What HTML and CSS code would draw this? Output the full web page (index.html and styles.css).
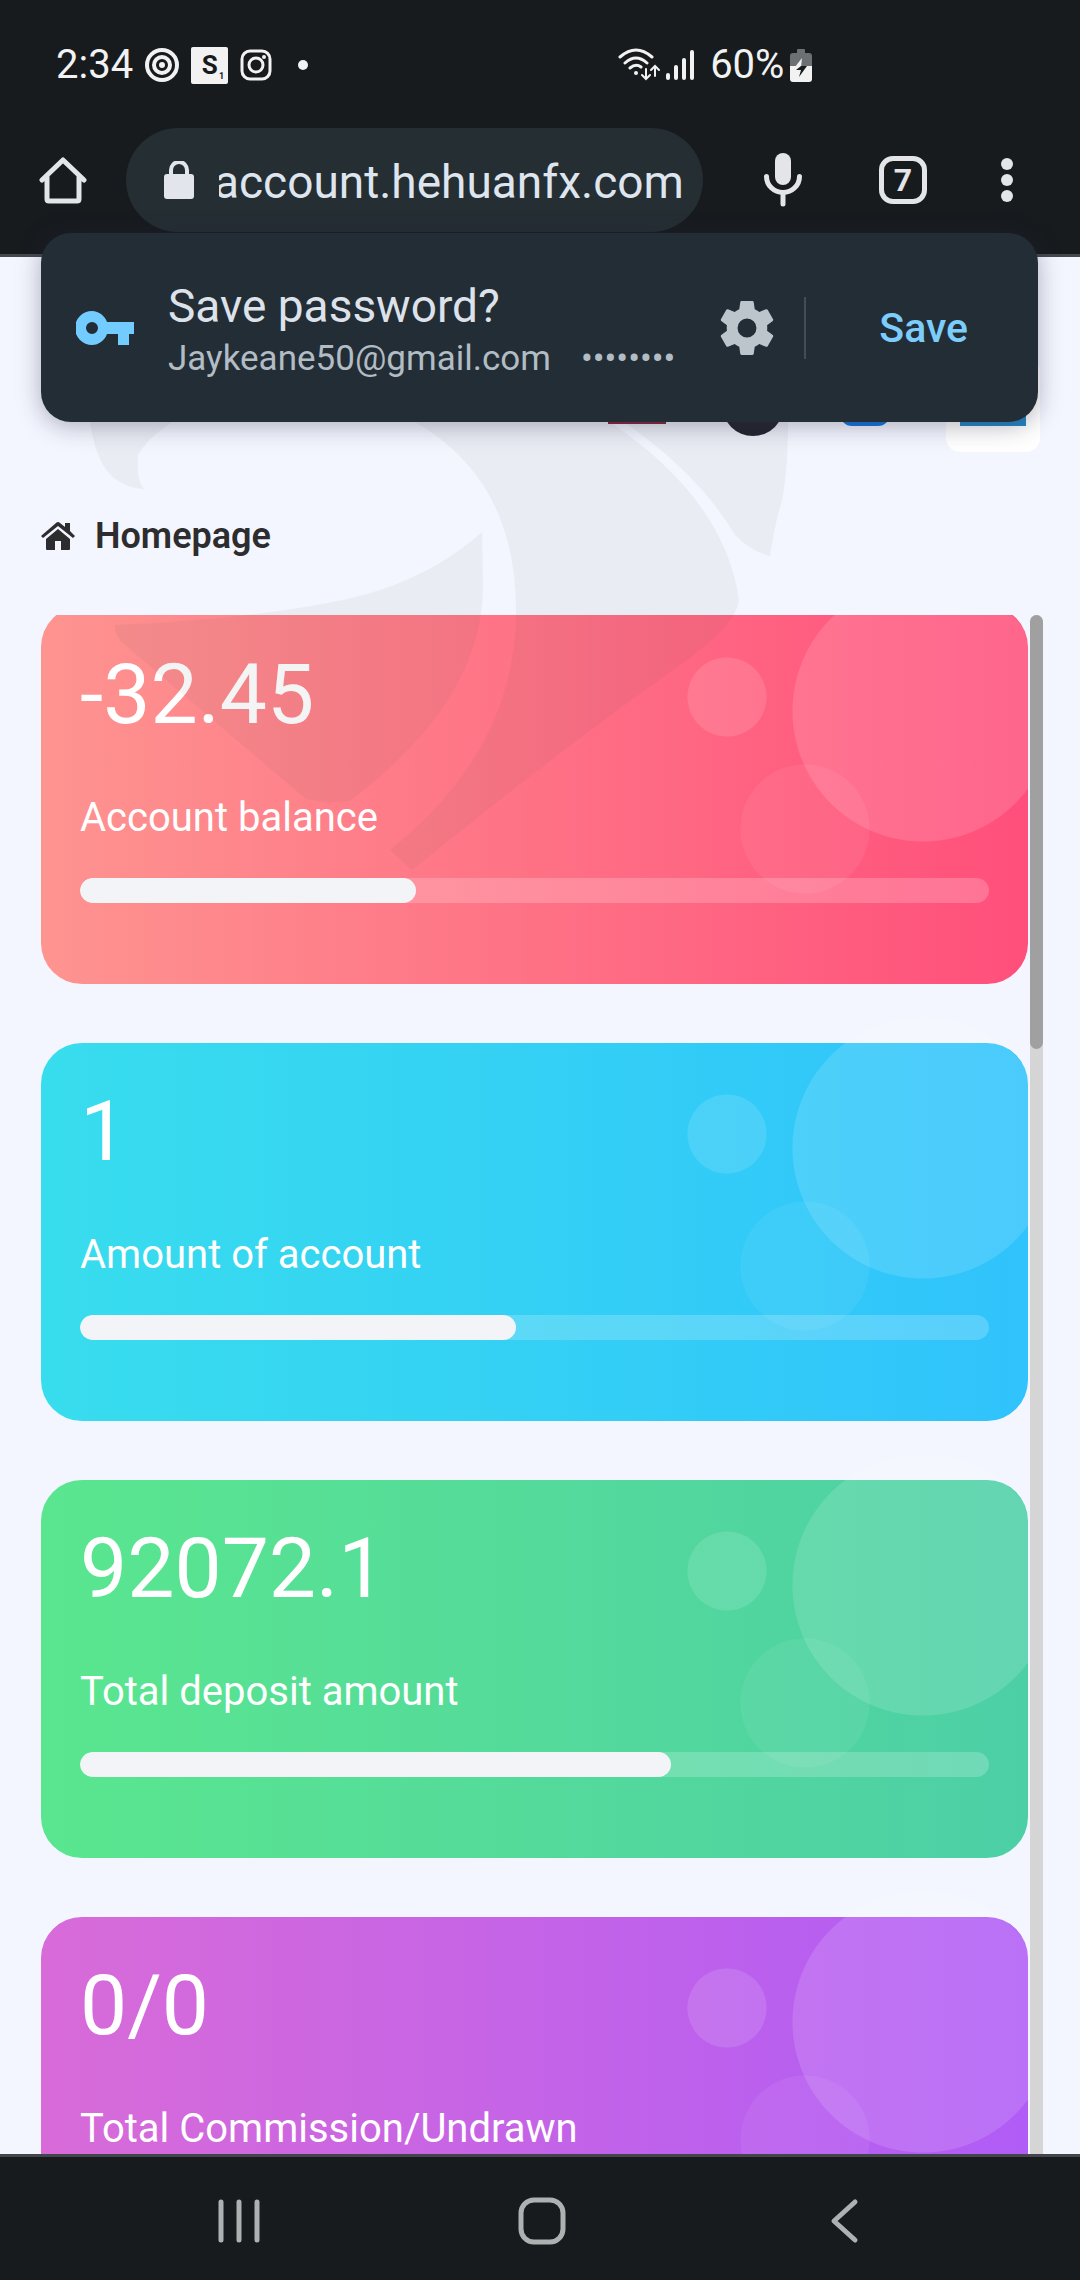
FILE: index.html
```html
<!DOCTYPE html>
<html lang="en">
<head>
<meta charset="utf-8">
<meta name="viewport" content="width=device-width, initial-scale=1">
<title>Homepage</title>
<link rel="stylesheet" href="styles.css">
</head>
<body>
<div class="screen">
  <header class="browser">
    <div class="status">
      <div class="status-left">
        <span>2:34</span>
        <svg width="34" height="34" viewBox="0 0 34 34" fill="none" stroke="#f2f2f2"><circle cx="17" cy="17" r="15" stroke-width="4"/><circle cx="17" cy="17" r="8" stroke-width="4"/><circle cx="17" cy="17" r="3" fill="#f2f2f2" stroke="none"/></svg>
        <span class="tile">S<sub class="tile-score">1</sub></span>
        <svg width="32" height="32" viewBox="0 0 32 32" fill="none" stroke="#f2f2f2" stroke-width="3"><rect x="2" y="2" width="28" height="28" rx="8"/><circle cx="16" cy="16" r="7"/><circle cx="24" cy="8" r="2" fill="#f2f2f2" stroke="none"/></svg>
        <span class="more-dot"></span>
      </div>
      <div class="status-right">
        <svg width="42" height="34" viewBox="0 0 42 34" fill="none" stroke="#f2f2f2" stroke-width="3" stroke-linecap="round"><path d="M2 9Q18-5 34 9M7 15Q18 5 29 15M12 20Q18 15 23 19"/><circle cx="18" cy="25" r="2" fill="#f2f2f2" stroke="none"/><path d="M28 21v10M24 27l4 4 4-4M37 28V19M33 22l4-4 4 4" stroke-width="2"/></svg>
        <svg width="28" height="30" viewBox="0 0 28 30" stroke="#f2f2f2" stroke-width="4" stroke-linecap="round"><path d="M2 25v3M10 17v11M18 10v18M26 2v26"/></svg>
        <span class="percent">60%</span>
        <svg width="22" height="34" viewBox="0 0 22 34"><path d="M7 2q0-1 1-1h6q1 0 1 1v3h4q3 0 3 3v10H0V8q0-3 3-3h4z" fill="#6d7072"/><path d="M0 18h22v13q0 3-3 3H3q-3 0-3-3z" fill="#f2f2f2"/><path d="M12 10L5 19h6z" fill="#f2f2f2"/><path d="M11 18h6L9 29l2-7H6z" fill="#171b1e"/></svg>
      </div>
    </div>
    <div class="toolbar">
      <button class="icon-btn home-btn" aria-label="Home"><svg width="48" height="48" viewBox="0 0 48 48" fill="none" stroke="#e3e5e8" stroke-width="5" stroke-linecap="round" stroke-linejoin="round"><path d="M3 24L24 4l21 20M8 20v23q0 2 2 2h28q2 0 2-2V20"/></svg></button>
      <div class="address">
        <svg width="30" height="38" viewBox="0 0 30 38"><rect x="0" y="13" width="30" height="25" rx="3" fill="#e3e5ec"/><path d="M7 14V9a8 8 0 0 1 16 0v5" fill="none" stroke="#e3e5ec" stroke-width="4"/></svg>
        <input class="url" type="text" aria-label="Address" value="account.hehuanfx.com">
      </div>
      <button class="icon-btn mic" aria-label="Voice search"><svg width="38" height="54" viewBox="0 0 38 54"><rect x="11" y="0" width="16" height="32" rx="8" fill="#e3e5e8"/><path d="M2.500 23.500a16.500 16 0 0 0 33 0M19 40v11" fill="none" stroke="#e3e5e8" stroke-width="5" stroke-linecap="round"/></svg></button>
      <button class="tabs" aria-label="7 open tabs">7</button>
      <button class="icon-btn" aria-label="Menu"><svg width="12" height="44" viewBox="0 0 12 44" fill="#e3e5e8"><circle cx="6" cy="6" r="6"/><circle cx="6" cy="22" r="6"/><circle cx="6" cy="38" r="6"/></svg></button>
    </div>
  </header>

  <section class="prompt" aria-label="Save password">
    <svg width="58" height="34" viewBox="0 0 58 34" fill="#73ccff"><path fill-rule="evenodd" d="M16 0c7 0 13 5 15 11h27v12h-5v11H42V23H31C29 29 23 34 16 34a17 17 0 0 1 0-34zm0 11a6 6 0 1 0 0 12 6 6 0 0 0 0-12z"/></svg>
    <div class="prompt-text">
      <h2 class="prompt-title">Save password?</h2>
      <p class="prompt-detail"><span>Jaykeane50@gmail.com</span><span>••••••••</span></p>
    </div>
    <button class="icon-btn" aria-label="Settings"><svg width="54" height="54" viewBox="2 2 20 20" fill="#bcc5cc"><path d="M19.430 12.980c.04-.32.07-.64.07-.98s-.03-.66-.07-.98l2.110-1.650c.19-.15.24-.42.12-.64l-2-3.460c-.12-.22-.39-.3-.61-.22l-2.490 1c-.52-.4-1.080-.73-1.690-.98l-.38-2.650A.49.49 0 0 0 14 2h-4c-.25 0-.46.180-.49.420l-.38 2.650c-.61.25-1.170.59-1.690.98l-2.490-1c-.23-.09-.49 0-.61.220l-2 3.460c-.13.22-.07.49.12.640l2.110 1.650c-.04.32-.07.65-.07.980s.03.66.07.980l-2.110 1.650c-.19.15-.24.42-.12.640l2 3.460c.12.22.39.3.61.220l2.490-1c.52.4 1.080.73 1.690.980l.38 2.650c.03.24.24.42.49.420h4c.25 0 .46-.18.49-.42l.38-2.650c.61-.25 1.170-.59 1.690-.98l2.490 1c.23.09.49 0 .61-.22l2-3.460c.12-.22.07-.49-.12-.64zM12 15.500a3.500 3.500 0 1 1 0-7 3.500 3.500 0 0 1 0 7z"/></svg></button>
    <span class="rule"></span>
    <button class="save">Save</button>
  </section>

  <main class="page">
    <div class="topbar">
      <span class="flag"></span>
      <span class="disc"></span>
      <span class="chip"></span>
      <span class="avatar"><span class="avatar-mark"></span></span>
    </div>
    <h1 class="crumb">
      <svg width="34" height="28" viewBox="0 0 34 28" fill="#2d2d30"><path d="M17 7L5 17v10q0 1 1 1h8v-9h6v9h8q1 0 1-1V17z"/><path d="M17 0q1 0 2 1l5 4V1h5v8l5 5-2 2L17 4 2 16l-2-2L15 1q1-1 2-1z"/></svg>
      Homepage
    </h1>
    <div class="scroll">
      <div class="cards">
        <article class="card coral">
          <p class="value">-32.45</p>
          <h2 class="label">Account balance</h2>
          <div class="track"><div class="fill" style="width:37%"></div></div>
        </article>
        <article class="card sky">
          <p class="value">1</p>
          <h2 class="label">Amount of account</h2>
          <div class="track"><div class="fill" style="width:48%"></div></div>
        </article>
        <article class="card green">
          <p class="value">92072.1</p>
          <h2 class="label">Total deposit amount</h2>
          <div class="track"><div class="fill" style="width:65%"></div></div>
        </article>
        <article class="card violet">
          <p class="value">0/0</p>
          <h2 class="label">Total Commission/Undrawn</h2>
          <div class="track"><div class="fill" style="width:75%"></div></div>
        </article>
      </div>
      <div class="scrollbar"><div class="thumb"></div></div>
    </div>
  </main>

  <nav class="sysnav">
    <button class="icon-btn" aria-label="Recent apps"><svg width="48" height="48" viewBox="0 0 48 48" stroke="#aeb1b2" stroke-width="5" stroke-linecap="round"><path d="M6 5v38M24 5v38M42 5v38"/></svg></button>
    <button class="icon-btn" aria-label="Home screen"><svg width="48" height="48" viewBox="0 0 48 48" fill="none" stroke="#aeb1b2" stroke-width="5"><rect x="3" y="3" width="42" height="42" rx="13"/></svg></button>
    <button class="icon-btn" aria-label="Back"><svg width="48" height="48" viewBox="0 0 48 48" fill="none" stroke="#aeb1b2" stroke-width="5" stroke-linecap="round" stroke-linejoin="round"><path d="M35 5L14 24l21 19"/></svg></button>
  </nav>

  <svg class="watermark" width="720" height="660" viewBox="80 220 720 660" fill="#5a5a50" aria-hidden="true">
    <path d="M90 422Q97 470 120 482Q132 489 144 489Q136 480 138 456Q145 440 172 422z"/>
    <path d="M415 422Q516 480 516 610Q516 750 390 850l22 20Q570 742 690 658Q737 622 739 600Q725 500 610 422z"/>
    <path d="M482 532Q440 570 380 590Q300 616 115 625Q114 636 125 645L306 799Q330 804 350 801Q483 700 483 585z"/>
    <path d="M624 422Q700 475 735 535Q752 552 770 556Q775 522 782 500Q788 470 788 422z"/>
  </svg>
</div>
</body>
</html>
```
FILE: styles.css
```css
* { box-sizing: border-box; }

body {
  margin: 0;
  font-family: Roboto, "Noto Sans", sans-serif;
  background: #f3f6fe;
}

h1, h2, p { margin: 0; font-weight: 400; }

svg { display: block; flex: none; }

.screen {
  position: relative;
  display: flex;
  flex-direction: column;
  height: 100vh;
  overflow: hidden;
}

/* Browser chrome */
.browser {
  flex: none;
  background: #171b1e;
  border-bottom: 3px solid #46484c;
  color: #f2f2f2;
}

.status {
  display: flex;
  align-items: center;
  gap: 310px;
  height: 128px;
  padding: 2px 56px 0;
  font-size: 40px;
  line-height: 48px;
}

.status-left, .status-right { display: flex; align-items: center; gap: 12px; }
.status-right { gap: 6px; }
.percent { margin-left: 10px; }

.tile {
  display: flex;
  justify-content: center;
  position: relative;
  width: 37px;
  height: 37px;
  border-radius: 2px;
  background: #f2f2f2;
  color: #171b1e;
  font: 700 26px/37px Roboto, sans-serif;
}

.tile-score { position: absolute; right: 4px; bottom: 3px; font-size: 9px; line-height: 9px; }

.more-dot { width: 10px; height: 10px; margin-left: 14px; border-radius: 50%; background: #f2f2f2; }

.toolbar { display: flex; align-items: center; height: 126px; padding: 0 67px 22px 39px; }

.icon-btn { flex: none; padding: 0; border: 0; background: none; }

.address {
  flex: 1;
  min-width: 0;
  display: flex;
  align-items: center;
  gap: 25px;
  height: 104px;
  margin: 0 61px 0 39px;
  padding: 0 18px 0 38px;
  border-radius: 52px;
  background: #242e33;
}

.url {
  flex: 1;
  min-width: 0;
  padding: 4px 0 0;
  border: 0;
  background: none;
  color: #dfe5ee;
  font: 400 46px/56px Roboto, sans-serif;
  text-indent: -5px;
}

.tabs {
  flex: none;
  width: 48px;
  height: 48px;
  margin: 0 74px 0 77px;
  padding: 0;
  border: 5px solid #e3e5e8;
  border-radius: 14px;
  background: none;
  color: #e3e5e8;
  font: 700 32px/38px Roboto, sans-serif;
}

/* Password prompt, floating over the page */
.prompt {
  position: absolute;
  z-index: 2;
  top: 233px;
  left: 41px;
  right: 42px;
  display: flex;
  align-items: center;
  height: 189px;
  padding: 0 70px 0 35px;
  border-radius: 30px;
  background: #232d35;
  box-shadow: 0 4px 24px rgba(40, 40, 70, 0.35);
}

.prompt-text { flex: 1; margin-left: 34px; padding-top: 6px; }
.prompt-title { color: #dde2ea; font-size: 46px; line-height: 56px; }
.prompt-detail { display: flex; gap: 30px; color: #b2bcc4; font-size: 35px; line-height: 50px; }
.rule { width: 2px; height: 62px; margin: 0 73px 0 30px; background: #434d55; }
.save { padding: 0; border: 0; background: none; color: #7ccdfb; font: 500 41px/48px Roboto, sans-serif; }

/* Page */
.page { flex: 1; min-height: 0; display: flex; flex-direction: column; padding: 0 37px 0 41px; }

.topbar {
  flex: none;
  display: flex;
  align-items: center;
  justify-content: flex-end;
  gap: 56px;
  height: 195px;
  padding: 101px 3px 0 0;
}

.flag { width: 58px; height: 38px; background: #8a2038; }
.disc { width: 62px; height: 62px; border-radius: 50%; background: #20202c; }
.chip { width: 50px; height: 42px; border-radius: 12px; background: #1274dc; }
.avatar { display: flex; align-items: center; justify-content: center; width: 94px; height: 94px; border-radius: 14px; background: #fff; }
.avatar-mark { width: 66px; height: 42px; background: #2386c2; }

.crumb {
  flex: none;
  display: flex;
  align-items: center;
  gap: 20px;
  height: 163px;
  padding-top: 4px;
  color: #2d2d30;
  font-size: 36px;
  line-height: 48px;
  font-weight: 600;
}

.scroll { flex: 1; min-height: 0; display: flex; gap: 2px; overflow: hidden; }

.cards { flex: 1; display: flex; flex-direction: column; gap: 59px; margin-top: -9px; }

.card {
  position: relative;
  flex: none;
  height: 378px;
  padding: 41px 39px;
  border-radius: 41px;
  color: #fff;
}

/* Decorative bubbles: the large one spills over the top edge */
.card::after {
  content: "";
  position: absolute;
  inset: -26px 0 0;
  background:
    radial-gradient(circle 131px at calc(100% - 105px) 131px, rgba(255, 255, 255, 0.13) 130px, transparent 131px),
    radial-gradient(circle 40px at calc(100% - 301px) 117px, rgba(255, 255, 255, 0.12) 39px, transparent 40px),
    radial-gradient(circle 65px at calc(100% - 223px) 249px, rgba(255, 255, 255, 0.06) 64px, transparent 65px);
}

.coral { background: linear-gradient(90deg, #fe9490, #ff4f7b); }
.sky { background: linear-gradient(90deg, #38dded, #30c3fc); }
.green { background: linear-gradient(90deg, #5ae68f, #4dcfa6); }
.violet { background: linear-gradient(90deg, #d86bd8, #b05cf6); }

.value { font-size: 84px; line-height: 96px; }
.label { margin-top: 51px; font-size: 40px; line-height: 48px; }

.track { height: 25px; margin-top: 36px; border-radius: 13px; background: rgba(255, 255, 255, 0.2); overflow: hidden; }
.fill { height: 100%; border-radius: 13px; background: #f2f4f8; }

.scrollbar { flex: none; width: 13px; background: #d5d5d5; border-radius: 7px 7px 0 0; }
.thumb { height: 434px; border-radius: 7px; background: #a0a0a0; }

/* System navigation */
.sysnav {
  flex: none;
  display: flex;
  align-items: center;
  justify-content: space-between;
  height: 126px;
  padding: 4px 212px 0 215px;
  border-top: 3px solid #43454d;
  background: #171b1e;
}

.watermark { position: absolute; z-index: 3; top: 220px; left: 80px; opacity: 0.06; pointer-events: none; }
```
